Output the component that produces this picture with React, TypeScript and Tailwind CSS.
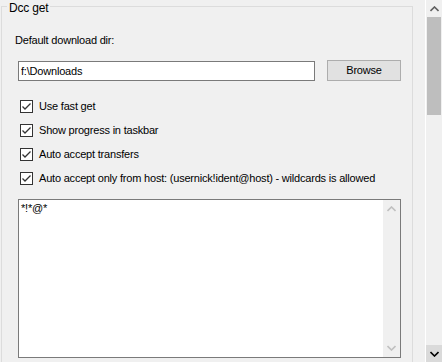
import { useState } from 'react'

const font = { fontFamily: '"Liberation Sans", Arial, sans-serif' }

const options = [
  'Use fast get',
  'Show progress in taskbar',
  'Auto accept transfers',
  'Auto accept only from host: (usernick!ident@host) - wildcards is allowed',
]

function Chevron({ up, color }: { up?: boolean; color: string }) {
  return (
    <svg width="9" height="6" viewBox="0 0 9 6">
      <polyline
        points={up ? '0.5,5 4.5,1 8.5,5' : '0.5,1 4.5,5 8.5,1'}
        fill="none"
        stroke={color}
        strokeWidth="1.6"
      />
    </svg>
  )
}

function Check({ label }: { label: string }) {
  const [on, setOn] = useState(true)
  return (
    <label className="flex items-center h-[13px] ml-[18px] gap-[6px] cursor-default" onClick={() => setOn(!on)}>
      <span className="w-[13px] h-[13px] border border-[#333333] bg-white flex items-center justify-center shrink-0">
        {on && (
          <svg width="11" height="11" viewBox="0 0 11 11">
            <polyline points="1.5,5.5 4,8 9.5,2.5" fill="none" stroke="#333333" strokeWidth="1.3" />
          </svg>
        )}
      </span>
      <span className="whitespace-nowrap">{label}</span>
    </label>
  )
}

export default function App() {
  return (
    <div className="w-[442px] h-[362px] bg-[#f0f0f0] flex overflow-hidden text-[11px] leading-[13px] tracking-[-0.2px] text-black" style={font}>
      {/* Options page */}
      <div className="w-[425px] shrink-0">
        <div className="relative ml-[1px] mt-[6px] w-[412px] h-[400px] border border-[#dcdcdc]">
          <span className="absolute -top-[5px] left-[5px] px-[2px] bg-[#f0f0f0] text-[12px] leading-[13px]">Dcc get</span>

          <div className="mt-[27px] ml-[13px] h-[13px]">Default download dir:</div>

          <div className="mt-[13px] ml-[16px] flex items-start">
            <input
              defaultValue="f:\Downloads"
              className="mt-[1px] w-[297px] h-[20px] border border-[#7a7a7a] bg-white px-[2px] outline-none text-[11px] tracking-[-0.2px]"
              style={font}
            />
            <button className="ml-[12px] w-[74px] h-[21px] bg-[#e1e1e1] border border-[#adadad] text-[11px] tracking-[-0.2px]" style={font}>
              Browse
            </button>
          </div>

          <div className="mt-[19px] flex flex-col gap-[11px]">
            {options.map((o) => (
              <Check key={o} label={o} />
            ))}
          </div>

          <div className="mt-[14px] ml-[16px] w-[383px] h-[159px] border border-[#7a7a7a] bg-white flex">
            <div className="flex-1 px-[2px] pt-[2px]">*!*@*</div>
            <div className="w-[17px] bg-[#f0f0f0] flex flex-col justify-between items-center py-[6px]">
              <Chevron up color="#c0c0c0" />
              <Chevron color="#c0c0c0" />
            </div>
          </div>
        </div>
      </div>

      {/* Window scrollbar */}
      <div className="w-[17px] shrink-0 border-l border-white bg-[#f0f0f0] flex flex-col">
        <div className="h-[17px] flex items-center justify-center">
          <Chevron up color="#606060" />
        </div>
        <div className="h-[98px] mx-[1px] bg-[#bebebe]" />
        <div className="flex-1" />
        <div className="h-[17px] bg-[#dadada] flex items-center justify-center">
          <Chevron color="#000000" />
        </div>
      </div>
    </div>
  )
}
